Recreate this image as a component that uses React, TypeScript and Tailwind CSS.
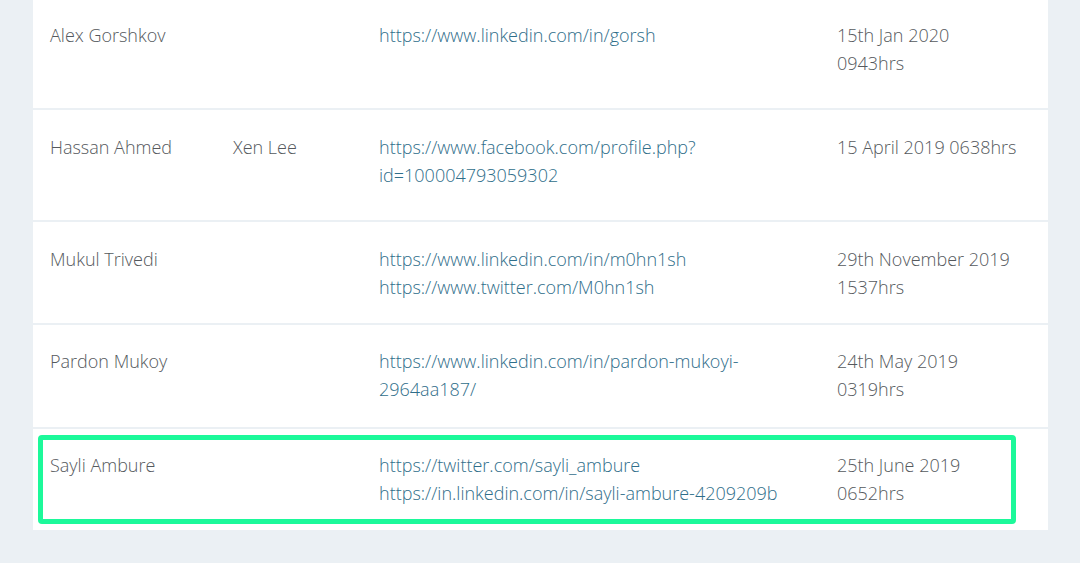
const rows = [
  {
    name: "Alex Gorshkov",
    alias: "",
    links: ["https://www.linkedin.com/in/gorsh"],
    date: ["15th Jan 2020", "0943hrs"],
    extra: "pt-[21px] pb-[31px]",
  },
  {
    name: "Hassan Ahmed",
    alias: "Xen Lee",
    links: ["https://www.facebook.com/profile.php?", "id=100004793059302"],
    date: ["15 April 2019 0638hrs"],
    extra: "pt-[23px] pb-[31px]",
  },
  {
    name: "Mukul Trivedi",
    alias: "",
    links: ["https://www.linkedin.com/in/m0hn1sh", "https://www.twitter.com/M0hn1sh"],
    date: ["29th November 2019", "1537hrs"],
    extra: "pt-[23px] pb-[22px]",
  },
  {
    name: "Pardon Mukoy",
    alias: "",
    links: ["https://www.linkedin.com/in/pardon-mukoyi-", "2964aa187/"],
    date: ["24th May 2019", "0319hrs"],
    extra: "pt-[22px] pb-[24px]",
  },
];

function Row({
  r,
}: {
  r: { name: string; alias: string; links: string[]; date: string[]; extra: string };
}) {
  return (
    <div className={`grid grid-cols-[183px_146px_458px_1fr] pl-[17px] bg-white ${r.extra}`}>
      <div>{r.name}</div>
      <div>{r.alias}</div>
      <div className="text-[#2f6e8a]">
        {r.links.map((l) => (
          <div key={l}>{l}</div>
        ))}
      </div>
      <div>
        {r.date.map((d) => (
          <div key={d}>{d}</div>
        ))}
      </div>
    </div>
  );
}

export default function App() {
  return (
    <div
      className="w-[1080px] h-[563px] overflow-hidden bg-[#ebf0f4] text-[18px] leading-[28px] text-[#55595d] font-light"
      style={{ fontFamily: '"Open Sans", "DejaVu Sans", sans-serif' }}
    >
      <div className="ml-[33px] w-[1015px] flex flex-col gap-[2px]">
        {rows.map((r) => (
          <Row key={r.name} r={r} />
        ))}
        <div className="bg-white pt-[6px] pb-[6px] pl-[5px]">
          <div className="w-[978px] border-[5px] border-[#1cf99a] rounded-[4px] grid grid-cols-[183px_146px_458px_1fr] pl-[7px] pt-[11px] pb-[12px]">
            <div>Sayli Ambure</div>
            <div></div>
            <div className="text-[#2f6e8a]">
              <div>https://twitter.com/sayli_ambure</div>
              <div>https://in.linkedin.com/in/sayli-ambure-4209209b</div>
            </div>
            <div>
              <div>25th June 2019</div>
              <div>0652hrs</div>
            </div>
          </div>
        </div>
      </div>
    </div>
  );
}
